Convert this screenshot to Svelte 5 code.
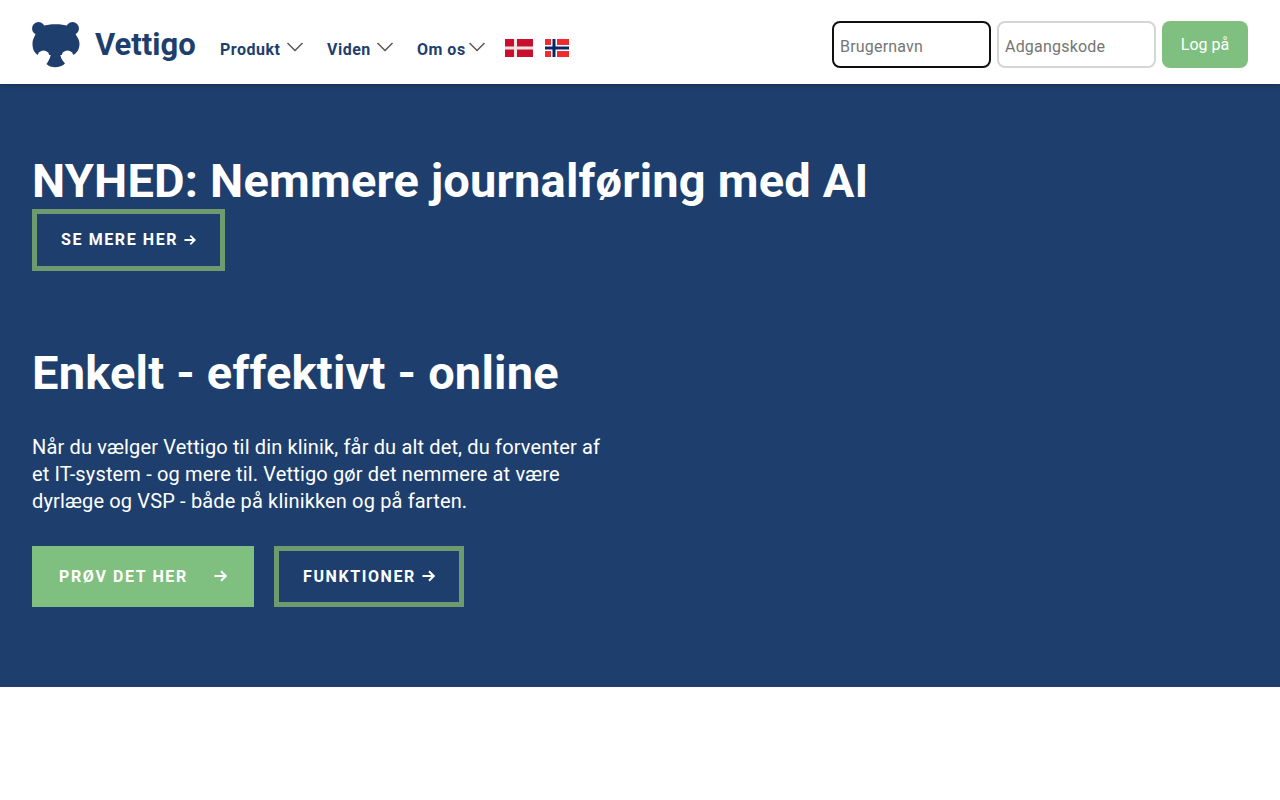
<script>
  const navItems = [
    { label: "Produkt", width: 107 },
    { label: "Viden", width: 90 },
    { label: "Om os", width: 92 },
  ];
</script>

{#snippet arrow()}
  <svg class="arrow" viewBox="0 0 13 12" width="13" height="12" aria-hidden="true">
    <path d="M0.5 6 H11.5 M7 1.2 L11.8 6 L7 10.8" fill="none" stroke="currentColor" stroke-width="2" />
  </svg>
{/snippet}

<header class="topbar">
  <a class="brand" href="#home">
    <svg class="logo" viewBox="0 0 48 46" width="48" height="46" aria-hidden="true">
      <g fill="#1e3f6d">
        <circle cx="6.5" cy="6.5" r="6.5" />
        <circle cx="40.5" cy="6.5" r="6.5" />
        <path d="M4 11 L11 4 C17 1.5 30 1.5 36 4 L43 11 C45 15 47.5 17 47.5 22 C47.5 27 45 31 41 33 L6 33 C2.5 31 0.5 27 0.5 22 C0.5 17 2.5 15 4 11 Z" />
        <path d="M14.5 42 C18 37 19 33 19 30 H28 C28 33 29 37 33 41.5 C28 46.5 19 46.5 14.5 42 Z" />
      </g>
      <circle cx="11.5" cy="34.5" r="6" fill="#fff" />
      <circle cx="35.5" cy="34.5" r="6" fill="#fff" />
    </svg>
    <span class="wordmark">Vettigo</span>
  </a>

  <nav class="menu">
    {#each navItems as item}
      <a class="menu-item" href="#menu" style="width: {item.width}px">
        <span>{item.label}</span>
        <svg class="chevron" viewBox="0 0 16 10" width="16" height="10" aria-hidden="true">
          <path d="M0.5 1 L8 8.5 L15.5 1" fill="none" stroke="#555" stroke-width="1.5" />
        </svg>
      </a>
    {/each}
    <svg class="flag dk" viewBox="0 0 28 18" width="28" height="18" aria-label="Dansk">
      <rect width="28" height="18" fill="#c8102e" />
      <rect x="9" width="3" height="18" fill="#f3e4e6" />
      <rect y="7.5" width="28" height="3" fill="#f3e4e6" />
    </svg>
    <svg class="flag no" viewBox="0 0 24 18" width="24" height="18" aria-label="Norsk">
      <rect width="24" height="18" fill="#ef2b2d" />
      <rect x="6" width="6" height="18" fill="#fff" />
      <rect y="6" width="24" height="6" fill="#fff" />
      <rect x="7.5" width="3" height="18" fill="#002868" />
      <rect y="7.5" width="24" height="3" fill="#002868" />
    </svg>
  </nav>

  <form class="login">
    <input class="focused" type="text" placeholder="Brugernavn" />
    <input type="password" placeholder="Adgangskode" />
    <button type="button">Log på</button>
  </form>
</header>

<main class="hero">
  <h2 class="news">NYHED: Nemmere journalføring med AI</h2>
  <a class="btn outline news-btn" href="#news">SE MERE HER {@render arrow()}</a>

  <h1>Enkelt - effektivt - online</h1>
  <p>Når du vælger Vettigo til din klinik, får du alt det, du forventer af et IT-system - og mere til. Vettigo gør det nemmere at være dyrlæge og VSP - både på klinikken og på farten.</p>

  <div class="actions">
    <a class="btn solid" href="#try">PRØV DET HER {@render arrow()}</a>
    <a class="btn outline func" href="#features">FUNKTIONER {@render arrow()}</a>
  </div>
</main>

<style>
  :global(body) {
    font-family: Roboto, "Liberation Sans", sans-serif;
    background: #fff;
  }
  a {
    text-decoration: none;
  }
  .topbar {
    position: relative;
    display: flex;
    align-items: center;
    box-sizing: border-box;
    height: 84px;
    padding: 5px 32px 0;
    background: #fff;
    box-shadow: 0 2px 4px rgba(0, 0, 0, 0.2);
    z-index: 2;
  }
  .brand {
    display: flex;
    align-items: center;
    gap: 15px;
    width: 164px;
    color: #1e3f6d;
  }
  .logo {
    flex: none;
  }
  .wordmark {
    font-size: 31px;
    font-weight: 700;
    line-height: 46px;
  }
  .menu {
    display: flex;
    align-items: center;
    margin-left: 24px;
    margin-top: 10px;
  }
  .menu-item {
    display: flex;
    align-items: center;
    gap: 3px;
    font-size: 16px;
    font-weight: 700;
    letter-spacing: 0.5px;
    white-space: nowrap;
    color: #1e3f6d;
  }
  .chevron {
    flex: none;
    margin-top: -6px;
    margin-left: auto;
    margin-right: 24px;
  }
  .flag {
    margin-top: -4px;
  }
  .flag.dk {
    margin-left: -4px;
  }
  .flag.no {
    margin-left: 12px;
  }
  .login {
    display: flex;
    gap: 6px;
    margin-left: auto;
  }
  input {
    box-sizing: border-box;
    width: 159px;
    height: 47px;
    padding: 3px 6px 0;
    border: 2px solid #d5d5d5;
    border-radius: 8px;
    font: inherit;
    font-size: 16px;
    letter-spacing: 0.2px;
    outline: none;
  }
  input::placeholder {
    color: #757575;
  }
  input.focused {
    border-color: #101010;
  }
  button {
    width: 86px;
    height: 47px;
    border: 0;
    border-radius: 8px;
    background: #7fbf7f;
    color: #fff;
    font: inherit;
    font-size: 16px;
  }
  .hero {
    height: 603px;
    box-sizing: border-box;
    padding: 68px 32px 0;
    background: #1e3f6d;
    color: #fff;
  }
  h1,
  h2 {
    margin: 0;
    font-size: 47px;
    font-weight: 700;
    line-height: 58px;
    letter-spacing: 0.2px;
  }
  .news {
    margin-bottom: -1px;
  }
  .btn {
    display: inline-flex;
    align-items: center;
    box-sizing: border-box;
    height: 61px;
    padding: 0 24px 1px;
    gap: 6px;
    color: #fff;
    font-size: 16px;
    font-weight: 700;
    letter-spacing: 1.6px;
    white-space: nowrap;
  }
  .outline {
    border: 5px solid #6e9b6e;
  }
  .news-btn {
    display: flex;
    width: 193px;
    height: 62px;
  }
  .solid {
    width: 222px;
    padding: 0 27px 1px;
    background: #7fbf7f;
  }
  .solid .arrow {
    margin-left: auto;
  }
  .func {
    width: 190px;
  }
  h1 {
    margin-top: 73px;
  }
  p {
    width: 575px;
    margin: 32px 0 0;
    font-size: 20px;
    line-height: 27px;
    letter-spacing: 0.15px;
  }
  .actions {
    display: flex;
    gap: 20px;
    margin-top: 31px;
  }
</style>
